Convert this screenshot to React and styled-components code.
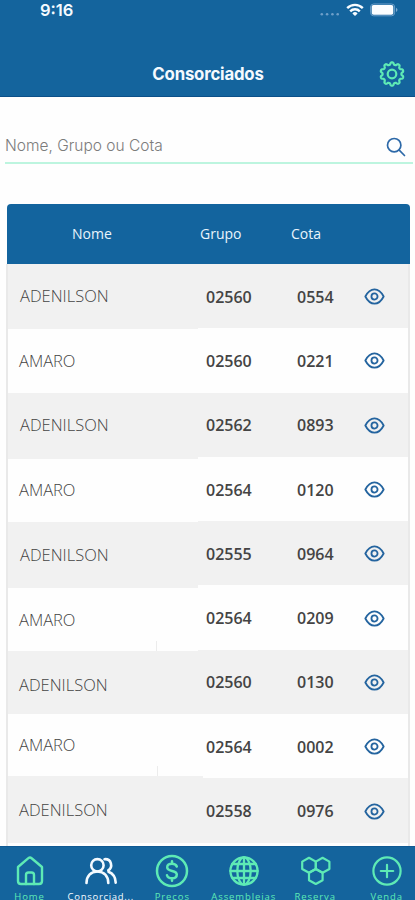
import React from 'react';
import styled, { createGlobalStyle } from 'styled-components';

// Styling
const GlobalStyle = createGlobalStyle`
  * {
    box-sizing: border-box;
  }

  body {
    margin: 0;
    background: #ffffff;
    overflow: hidden;
  }
`;

const Screen = styled.div`
  display: flex;
  flex-direction: column;
  width: 415px;
  height: 900px;
  overflow: hidden;
  background: #fefefe;
  font-family: 'Open Sans', 'Noto Sans', sans-serif;
`;

const Header = styled.header`
  flex: none;
  height: 97px;
  background: #14649d;
  border-bottom: 1px solid #0c5089;
  color: #f4faff;
  font-family: Inter, 'Liberation Sans', sans-serif;
`;

const StatusBar = styled.div`
  display: flex;
  align-items: center;
  justify-content: space-between;
  height: 20px;
  padding: 0 17px 0 40px;
`;

const Clock = styled.span`
  font-size: 16.5px;
  font-weight: 600;
  line-height: 20px;
`;

const StatusIcons = styled.div`
  display: flex;
  align-items: center;
`;

const SpacedIcon = styled.span`
  display: flex;
  margin-left: ${props => props.$left}px;
`;

const TitleBar = styled.div`
  display: grid;
  grid-template-columns: 38px 1fr 37px;
  align-items: center;
  height: 30px;
  margin-top: 39px;
`;

const Title = styled.h1`
  grid-column: 2;
  margin: 0;
  font-size: 16.8px;
  font-weight: 700;
  letter-spacing: -0.2px;
  line-height: 30px;
  text-align: center;
`;

const IconButton = styled.button`
  display: flex;
  padding: 0;
  border: 0;
  background: none;
  color: ${props => props.$color};
`;

const SearchField = styled.div`
  flex: none;
  display: flex;
  align-items: center;
  justify-content: space-between;
  height: 35px;
  margin: 32px 2px 0 5px;
  padding-right: 7px;
  border-bottom: 2px solid #bdf5df;
`;

const SearchInput = styled.input`
  width: 300px;
  height: 30px;
  padding: 0;
  border: 0;
  outline: none;
  background: none;
  font-family: Inter, 'Liberation Sans', sans-serif;
  font-size: 15.5px;
  font-weight: 300;

  &::placeholder {
    color: #7c7c7c;
    opacity: 1;
  }
`;

const SearchButton = styled(IconButton)`
  margin-top: 3px;
`;

const Table = styled.section`
  flex: 1;
  display: flex;
  flex-direction: column;
  min-height: 0;
  margin: 40px 5px 0 6px;
  overflow: hidden;
`;

const TableHead = styled.div`
  flex: none;
  display: flex;
  align-items: center;
  height: 60px;
  margin-left: 1px;
  border-radius: 4px 4px 0 0;
  background: #13649e;
  color: #e9f4fc;
  font-size: 14px;
  line-height: 20px;
`;

const HeadCell = styled.span`
  width: ${props => props.$width}px;
  padding-left: ${props => props.$indent || 0}px;
`;

const TableBody = styled.div`
  flex: 1;
  display: flex;
  border: solid #e9e9e9;
  border-width: 0 2px;
`;

const NameColumn = styled.div`
  width: 190px;
`;

const NameCell = styled.div`
  position: relative;
  display: flex;
  align-items: flex-start;
  justify-content: space-between;
  width: ${props => props.$width || 190}px;
  height: ${props => props.$height}px;
  padding: ${props => props.$top}px 0 0 ${props => props.$left}px;
  background: ${props => (props.$shaded ? '#f1f1f1' : '#fefefe')};
  color: #444444;
  font-size: 16.5px;
  font-weight: 300;
  line-height: 20px;
`;

const Tick = styled.i`
  align-self: flex-end;
  width: 1px;
  height: 10px;
  margin-right: ${props => props.$right}px;
  background: #ececec;
`;

const DataColumn = styled.div`
  flex: 1;
`;

const DataRow = styled.div`
  display: grid;
  grid-template-columns: 91px 67px 1fr;
  align-items: center;
  height: 64.3px;
  padding: 1px 0 0 8px;
  background: ${props => (props.$shaded ? '#f1f1f1' : '#fefefe')};
  color: #444444;
  font-size: 16px;
  font-weight: 600;
  line-height: 20px;
`;

const TabBar = styled.nav`
  flex: none;
  display: flex;
  height: 54px;
  background: #14649d;
  border-top: 1px solid #0f5993;
`;

const Tab = styled.a`
  flex: none;
  display: flex;
  flex-direction: column;
  align-items: center;
  width: 71.5px;
  padding-top: 8px;
  color: ${props => (props.$active ? '#f3faff' : '#5eeab5')};

  &:first-child {
    width: 65px;
    padding-right: 6px;
  }
`;

const IconSlot = styled.span`
  display: flex;
  align-items: center;
  height: 32px;
`;

const TabLabel = styled.span`
  margin-top: 3px;
  font-size: 9.5px;
  letter-spacing: ${props => props.$spacing}px;
  line-height: 13px;
  white-space: nowrap;
`;

// Icons
const Svg = ({ size, children, width = 2.3, box = size }) => (
  <svg
    width={size}
    height={size}
    viewBox={`0 0 ${box} ${box}`}
    fill="none"
    stroke="currentColor"
    strokeWidth={width}
    strokeLinecap="round"
    strokeLinejoin="round"
  >
    {children}
  </svg>
);

const SignalIcon = () => (
  <svg width="20" height="18" viewBox="0 0 20 18" fill="#6e9fc9">
    <circle cx="1.8" cy="13.2" r="1.3" />
    <circle cx="7.1" cy="13.2" r="1.3" />
    <circle cx="12.4" cy="13.2" r="1.3" />
    <circle cx="17.7" cy="13.2" r="1.3" />
  </svg>
);

const WifiIcon = () => (
  <svg width="18" height="14" viewBox="0 0 18 14" fill="none" stroke="#f8fcff" strokeWidth="2.4">
    <path d="M1.2 5.1a11 11 0 0 1 15.6 0" />
    <path d="M4.2 8.3a6.8 6.8 0 0 1 9.6 0" />
    <path d="M9 13 6.4 10.4a3.7 3.7 0 0 1 5.2 0Z" fill="#f8fcff" stroke="none" />
  </svg>
);

const BatteryIcon = () => (
  <svg width="28" height="14" viewBox="0 0 28 14">
    <rect x="0.6" y="1" width="24" height="11.8" rx="3" fill="none" stroke="#6c9fca" />
    <rect x="1.7" y="2" width="21.6" height="9.8" rx="1.8" fill="#fbfdff" />
    <path d="M26 4.7c2 .8 2 3.4 0 4.2Z" fill="#7da9d0" />
  </svg>
);

const GearIcon = () => {
  const points = [];
  // ten rounded lobes round the hub
  for (let i = 0; i < 160; i += 1) {
    const turn = (i / 160) * Math.PI * 2;
    const angle = turn - Math.PI / 2;
    const radius = 10.5 + Math.tanh(Math.cos(turn * 10) * 1.8) * 1.15;
    points.push(`${(14 + radius * Math.cos(angle)).toFixed(2)},${(14 + radius * Math.sin(angle)).toFixed(2)}`);
  }
  return (
    <Svg size={28} width={2.2}>
      <polygon points={points.join(' ')} />
      <circle cx="14" cy="14" r="4.3" />
    </Svg>
  );
};

const SearchIcon = () => (
  <Svg size={20} width={1.7}>
    <circle cx="8.2" cy="8.2" r="6.7" />
    <path d="m13.2 13.2 5.3 5.3" />
  </Svg>
);

const EyeIcon = () => (
  <Svg size={21} box={22} width={1.9}>
    <path d="M1.4 11C3.7 6.5 7 3.5 11 3.5S18.3 6.5 20.6 11C18.3 15.5 15 18.5 11 18.5S3.7 15.5 1.4 11Z" />
    <circle cx="11" cy="11" r="3.2" />
  </Svg>
);

const HomeIcon = () => (
  <Svg size={32} width={2.4}>
    <path d="M4 12 14.4 3.2q1.6-1.3 3.2 0L28 12V26q0 3-3 3H7q-3 0-3-3Z" />
    <path d="M12 29V20q0-2.5 2.5-2.5h3q2.5 0 2.5 2.5v9" />
  </Svg>
);

const PeopleIcon = () => (
  <Svg size={34} width={2.6}>
    <circle cx="13.4" cy="11.3" r="6.2" />
    <path d="M2.5 29c0-7 4.3-11.5 10.9-11.5S24.3 22 24.3 29" />
    <path d="M20.5 5.2c7-.5 8.7 7.7 3.8 11.2M24.5 17.8c4.4 1.7 7 5.4 7.2 10.8" />
  </Svg>
);

const MoneyIcon = () => (
  <Svg size={34} width={2.5}>
    <circle cx="17" cy="17" r="15" />
    <path d="M21.8 12.5c-.7-2-2.3-2.8-4.8-2.8-2.9 0-4.8 1.2-4.8 3.5 0 5.1 9.6 2.4 9.6 7.3 0 2.4-2 3.8-4.8 3.8-2.7 0-4.5-1.1-5-3.1M17 7.2v2.5M17 24.3v2.5" />
  </Svg>
);

const GlobeIcon = () => (
  <Svg size={32}>
    <circle cx="16" cy="16" r="13.6" />
    <ellipse cx="16" cy="16" rx="6.7" ry="13.6" />
    <path d="M16 2.4v27.2M2.4 16h27.2M4.4 9h23.2M4.4 23h23.2" />
  </Svg>
);

const HexagonsIcon = () => (
  <Svg size={32} width={2.2}>
    <path d="m10 2.8 6.8 3.8v7.4L10 17.800l-6.800-3.800V6.600Z" />
    <path d="m23.600 2.800 6.800 3.800v7.400l-6.800 3.800-6.800-3.800V6.600Z" />
    <path d="m16.800 14 6.800 3.800v7.400l-6.800 3.800-6.800-3.800v-7.400Z" />
  </Svg>
);

const PlusIcon = () => (
  <Svg size={32} width={2.2}>
    <circle cx="16" cy="16" r="13.6" />
    <path d="M16 9.8v12.4M9.8 16h12.4" />
  </Svg>
);

// Members data
const members = [
  { name: 'ADENILSON', group: '02560', quota: '0554', height: 64.5, top: 22, left: 12 },
  { name: 'AMARO', group: '02560', quota: '0221', height: 64.5, top: 22, left: 11 },
  { name: 'ADENILSON', group: '02562', quota: '0893', height: 65.5, top: 22, left: 12 },
  { name: 'AMARO', group: '02564', quota: '0120', height: 63.5, top: 21, left: 11 },
  { name: 'ADENILSON', group: '02555', quota: '0964', height: 66, top: 23, left: 12 },
  { name: 'AMARO', group: '02564', quota: '0209', height: 62.5, top: 22, left: 11, tick: 41 },
  { name: 'ADENILSON', group: '02560', quota: '0130', height: 63, top: 24, left: 11 },
  { name: 'AMARO', group: '02564', quota: '0002', height: 62.5, top: 21, left: 11, width: 195, tick: 45 },
  { name: 'ADENILSON', group: '02558', quota: '0976', height: 67, top: 24, left: 11, width: 195 },
];

const tabs = [
  { label: 'Home', icon: HomeIcon, spacing: 0.9 },
  { label: 'Consorciad...', icon: PeopleIcon, spacing: 0.7, active: true },
  { label: 'Preços', icon: MoneyIcon, spacing: 0.9 },
  { label: 'Assembleias', icon: GlobeIcon, spacing: 0.9 },
  { label: 'Reserva', icon: HexagonsIcon, spacing: 0.9 },
  { label: 'Venda', icon: PlusIcon, spacing: 0.9 },
];

const App = () => {
  return (
    <Screen>
      <GlobalStyle />
      <Header>
        <StatusBar>
          <Clock>9:16</Clock>
          <StatusIcons>
            <SignalIcon />
            <SpacedIcon $left={6}><WifiIcon /></SpacedIcon>
            <SpacedIcon $left={6}><BatteryIcon /></SpacedIcon>
          </StatusIcons>
        </StatusBar>
        <TitleBar>
          <Title>Consorciados</Title>
          <IconButton $color="#5eeab5" aria-label="Configurações">
            <GearIcon />
          </IconButton>
        </TitleBar>
      </Header>

      <SearchField>
        <SearchInput placeholder="Nome, Grupo ou Cota" />
        <SearchButton $color="#2d69a8" aria-label="Buscar">
          <SearchIcon />
        </SearchButton>
      </SearchField>

      <Table>
        <TableHead>
          <HeadCell $width={193} $indent={65}>Nome</HeadCell>
          <HeadCell $width={91}>Grupo</HeadCell>
          <HeadCell $width={100}>Cota</HeadCell>
        </TableHead>
        <TableBody>
          <NameColumn>
            {members.map((member, index) => (
              <NameCell
                key={index}
                $height={member.height}
                $top={member.top}
                $left={member.left}
                $width={member.width}
                $shaded={index % 2 === 0}
              >
                {member.name}
                {member.tick && <Tick $right={member.tick} />}
              </NameCell>
            ))}
          </NameColumn>
          <DataColumn>
            {members.map((member, index) => (
              <DataRow key={index} $shaded={index % 2 === 0}>
                <span>{member.group}</span>
                <span>{member.quota}</span>
                <IconButton $color="#24649f" aria-label="Ver">
                  <EyeIcon />
                </IconButton>
              </DataRow>
            ))}
          </DataColumn>
        </TableBody>
      </Table>

      <TabBar>
        {tabs.map(({ label, icon: Icon, spacing, active }) => (
          <Tab key={label} $active={active}>
            <IconSlot>
              <Icon />
            </IconSlot>
            <TabLabel $spacing={spacing}>{label}</TabLabel>
          </Tab>
        ))}
      </TabBar>
    </Screen>
  );
};

export default App;
